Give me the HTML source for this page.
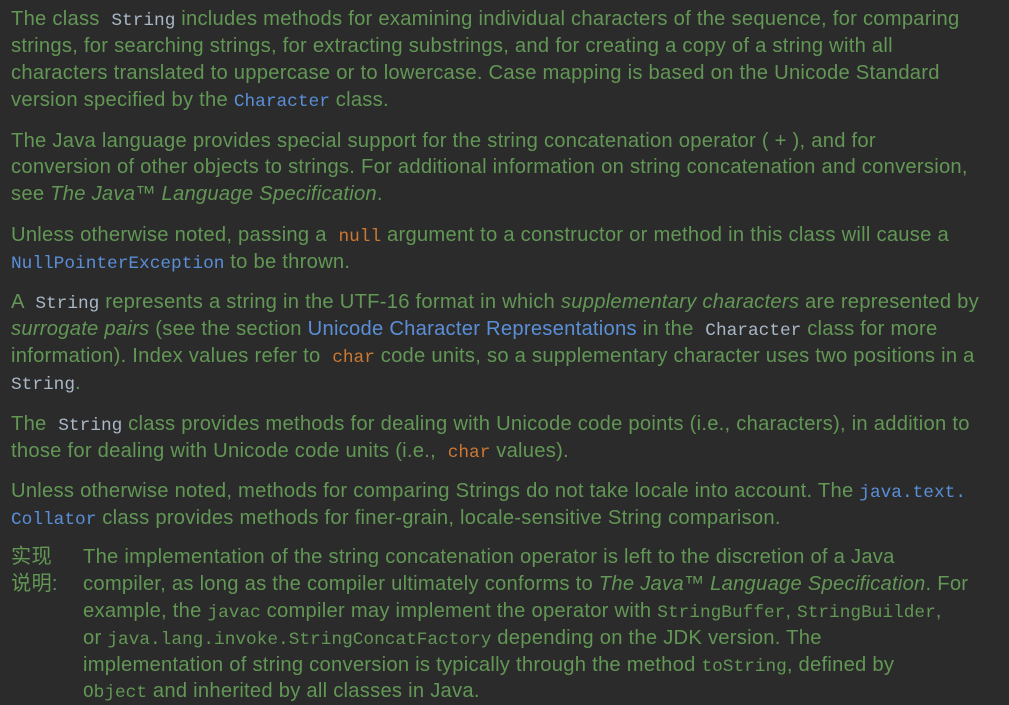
<!DOCTYPE html>
<html><head><meta charset="utf-8"><style>
html,body{margin:0;padding:0;background:#2b2b2b;width:1009px;height:705px;overflow:hidden}
body{font-family:"Liberation Sans","Noto Sans CJK SC",sans-serif;font-size:20.2px;letter-spacing:0.25px;color:#629755}
.L{position:absolute;left:11px;height:27px;line-height:27px;white-space:nowrap}
.I{left:83px}
code{font-family:"Liberation Mono",monospace;font-size:17.8px;line-height:1;letter-spacing:0}
.s{color:#a9b7c6}.l{color:#5a8fd8}.o{color:#cc7832}
i{font-style:italic}
</style></head><body>
<div class="L" style="top:6px">The class &nbsp;<code class="s">String</code> includes methods for examining individual characters of the sequence, for comparing</div>
<div class="L" style="top:33px">strings, for searching strings, for extracting substrings, and for creating a copy of a string with all</div>
<div class="L" style="top:60px">characters translated to uppercase or to lowercase. Case mapping is based on the Unicode Standard</div>
<div class="L" style="top:87px">version specified by the <code class="l">Character</code> class.</div>

<div class="L" style="top:128px">The Java language provides special support for the string concatenation operator ( + ), and for</div>
<div class="L" style="top:154px">conversion of other objects to strings. For additional information on string concatenation and conversion,</div>
<div class="L" style="top:181px">see <i>The Java™ Language Specification</i>.</div>

<div class="L" style="top:222px">Unless otherwise noted, passing a &nbsp;<code class="o">null</code> argument to a constructor or method in this class will cause a</div>
<div class="L" style="top:249px"><code class="l">NullPointerException</code> to be thrown.</div>

<div class="L" style="top:289px">A &nbsp;<code class="s">String</code> represents a string in the UTF-16 format in which <i>supplementary characters</i> are represented by</div>
<div class="L" style="top:316px"><i>surrogate pairs</i> (see the section <span class="l">Unicode Character Representations</span> in the &nbsp;<code class="s">Character</code> class for more</div>
<div class="L" style="top:343px">information). Index values refer to &nbsp;<code class="o">char</code> code units, so a supplementary character uses two positions in a</div>
<div class="L" style="top:370px"><code class="s">String</code>.</div>

<div class="L" style="top:411px">The &nbsp;<code class="s">String</code> class provides methods for dealing with Unicode code points (i.e., characters), in addition to</div>
<div class="L" style="top:438px">those for dealing with Unicode code units (i.e., &nbsp;<code class="o">char</code> values).</div>

<div class="L" style="top:478px">Unless otherwise noted, methods for comparing Strings do not take locale into account. The <code class="l">java.text.</code></div>
<div class="L" style="top:505px"><code class="l">Collator</code> class provides methods for finer-grain, locale-sensitive String comparison.</div>

<div class="L" style="top:544px">实现</div>
<div class="L" style="top:571px">说明:</div>
<div class="L I" style="top:544px">The implementation of the string concatenation operator is left to the discretion of a Java</div>
<div class="L I" style="top:571px">compiler, as long as the compiler ultimately conforms to <i>The Java™ Language Specification</i>. For</div>
<div class="L I" style="top:598px">example, the <code>javac</code> compiler may implement the operator with <code>StringBuffer</code>, <code>StringBuilder</code>,</div>
<div class="L I" style="top:625px">or <code>java.lang.invoke.StringConcatFactory</code> depending on the JDK version. The</div>
<div class="L I" style="top:652px">implementation of string conversion is typically through the method <code>toString</code>, defined by</div>
<div class="L I" style="top:678px"><code>Object</code> and inherited by all classes in Java.</div>
</body></html>
